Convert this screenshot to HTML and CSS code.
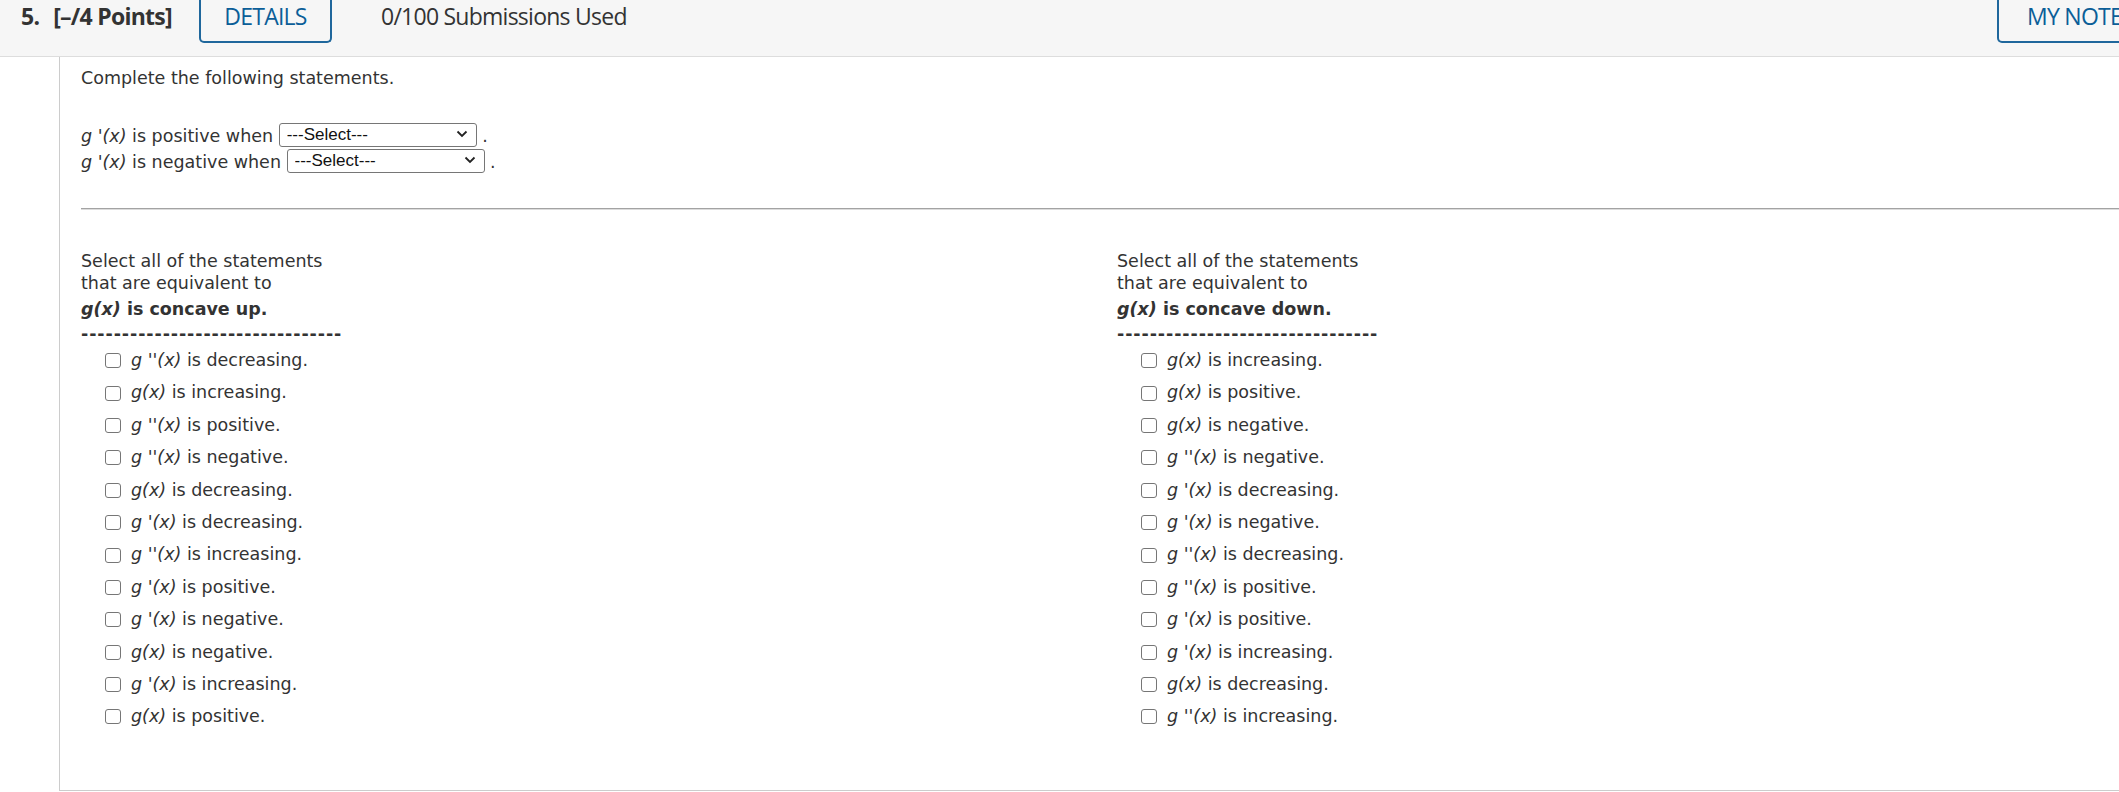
FILE: index.html
```html
<!DOCTYPE html>
<html lang="en">
<head>
<meta charset="utf-8">
<title>Question 5</title>
<link rel="stylesheet" href="styles.css">
</head>
<body>
<header class="topbar">
  <div class="qtitle">
    <span class="qnum">5.</span>
    <span class="points">[–/4 Points]</span>
  </div>
  <button class="tab-btn details" type="button">DETAILS</button>
  <span class="subs">0/100 Submissions Used</span>
  <button class="tab-btn notes" type="button">MY NOTES</button>
</header>

<main class="panel">
  <p class="intro">Complete the following statements.</p>
  <div class="fill">
    <div class="fill-row"><i>g</i> <i>'(x)</i> is positive when <span class="dd"><select><option>---Select---</option></select><svg class="chev" width="12" height="8" viewBox="0 0 12 8"><path d="M1.5 1.5 L6 6 L10.5 1.5" fill="none" stroke="#222" stroke-width="1.8"/></svg></span> .</div>
    <div class="fill-row"><i>g</i> <i>'(x)</i> is negative when <span class="dd"><select><option>---Select---</option></select><svg class="chev" width="12" height="8" viewBox="0 0 12 8"><path d="M1.5 1.5 L6 6 L10.5 1.5" fill="none" stroke="#222" stroke-width="1.8"/></svg></span> .</div>
  </div>
  <hr class="rule">
  <div class="cols">
    <section class="col">
      <div class="col-head">Select all of the statements<br>that are equivalent to</div>
      <div class="concave"><b><i>g(x)</i> is concave up.</b></div>
      <div class="dashes">--------------------------------</div>
      <ul class="opts">
        <li><input type="checkbox"><span><i>g</i> <i>''(x)</i> is decreasing.</span></li>
        <li><input type="checkbox"><span><i>g(x)</i> is increasing.</span></li>
        <li><input type="checkbox"><span><i>g</i> <i>''(x)</i> is positive.</span></li>
        <li><input type="checkbox"><span><i>g</i> <i>''(x)</i> is negative.</span></li>
        <li><input type="checkbox"><span><i>g(x)</i> is decreasing.</span></li>
        <li><input type="checkbox"><span><i>g</i> <i>'(x)</i> is decreasing.</span></li>
        <li><input type="checkbox"><span><i>g</i> <i>''(x)</i> is increasing.</span></li>
        <li><input type="checkbox"><span><i>g</i> <i>'(x)</i> is positive.</span></li>
        <li><input type="checkbox"><span><i>g</i> <i>'(x)</i> is negative.</span></li>
        <li><input type="checkbox"><span><i>g(x)</i> is negative.</span></li>
        <li><input type="checkbox"><span><i>g</i> <i>'(x)</i> is increasing.</span></li>
        <li><input type="checkbox"><span><i>g(x)</i> is positive.</span></li>
      </ul>
    </section>
    <section class="col">
      <div class="col-head">Select all of the statements<br>that are equivalent to</div>
      <div class="concave"><b><i>g(x)</i> is concave down.</b></div>
      <div class="dashes">--------------------------------</div>
      <ul class="opts">
        <li><input type="checkbox"><span><i>g(x)</i> is increasing.</span></li>
        <li><input type="checkbox"><span><i>g(x)</i> is positive.</span></li>
        <li><input type="checkbox"><span><i>g(x)</i> is negative.</span></li>
        <li><input type="checkbox"><span><i>g</i> <i>''(x)</i> is negative.</span></li>
        <li><input type="checkbox"><span><i>g</i> <i>'(x)</i> is decreasing.</span></li>
        <li><input type="checkbox"><span><i>g</i> <i>'(x)</i> is negative.</span></li>
        <li><input type="checkbox"><span><i>g</i> <i>''(x)</i> is decreasing.</span></li>
        <li><input type="checkbox"><span><i>g</i> <i>''(x)</i> is positive.</span></li>
        <li><input type="checkbox"><span><i>g</i> <i>'(x)</i> is positive.</span></li>
        <li><input type="checkbox"><span><i>g</i> <i>'(x)</i> is increasing.</span></li>
        <li><input type="checkbox"><span><i>g(x)</i> is decreasing.</span></li>
        <li><input type="checkbox"><span><i>g</i> <i>''(x)</i> is increasing.</span></li>
      </ul>
    </section>
  </div>
</main>
</body>
</html>
```

FILE: styles.css
```css
html, body {
  margin: 0;
  padding: 0;
  background: #ffffff;
}

body {
  overflow: hidden;
}

.topbar {
  display: flex;
  align-items: flex-start;
  box-sizing: border-box;
  height: 57px;
  background: #f6f6f6;
  border-bottom: 1px solid #dddddd;
  overflow: hidden;
  font-family: "Open Sans", "Liberation Sans", sans-serif;
  font-size: 23px;
  letter-spacing: -0.75px;
  line-height: 32px;
  color: #333333;
}

.qtitle {
  box-sizing: border-box;
  width: 199px;
  padding-left: 21px;
  display: flex;
  font-weight: 700;
  white-space: nowrap;
}

.points {
  margin-left: 14px;
}

.tab-btn {
  box-sizing: border-box;
  height: 43px;
  padding: 0;
  margin: 0;
  background: transparent;
  border: 2px solid #1f679c;
  border-top: 0;
  border-radius: 0 0 5px 5px;
  font: inherit;
  letter-spacing: -0.75px;
  line-height: 32px;
  color: #0b5e98;
  display: flex;
  justify-content: center;
  align-items: flex-start;
  white-space: nowrap;
  cursor: pointer;
}

.details {
  width: 133px;
}

.subs {
  margin-left: 49px;
  white-space: nowrap;
}

.notes {
  margin-left: auto;
  margin-right: -45px;
  width: 167px;
}

.panel {
  display: block;
  margin-left: 59px;
  border-left: 1px solid #cccccc;
  border-bottom: 1px solid #cccccc;
  padding: 10px 0 57px 21px;
  font-family: "DejaVu Sans", Verdana, sans-serif;
  font-size: 17.5px;
  color: #333333;
}

.intro {
  margin: 0;
  line-height: 22px;
}

.fill {
  margin-top: 32px;
}

.fill-row {
  line-height: 26px;
  height: 26px;
}

.dd {
  position: relative;
  display: inline-block;
  vertical-align: 2px;
}

.dd select {
  -webkit-appearance: none;
  appearance: none;
  box-sizing: border-box;
  width: 198px;
  height: 24px;
  margin: 0;
  padding: 0 24px 0 7px;
  border: 1px solid #767676;
  border-radius: 3px;
  background: #ffffff;
  font-family: "Liberation Sans", Arial, sans-serif;
  font-size: 17px;
  color: #111111;
}

.chev {
  position: absolute;
  right: 9px;
  top: 9px;
  pointer-events: none;
}

.rule {
  margin: 35px 0 0 0;
  height: 0;
  border: 0;
  border-top: 1px solid #a3a3a3;
  border-bottom: 1px solid #dcdcdc;
}

.cols {
  display: grid;
  grid-template-columns: 1036px 1fr;
  margin-top: 40px;
}

.col-head {
  line-height: 22px;
}

.concave {
  margin-top: 4px;
  line-height: 22px;
}

.dashes {
  margin-top: 3px;
  line-height: 22px;
  font-weight: 700;
  letter-spacing: 0.9px;
  white-space: nowrap;
}

.opts {
  list-style: none;
  margin: -1px 0 0 0;
  padding: 0;
}

.opts li {
  display: flex;
  align-items: center;
  height: 32.4px;
  line-height: 32.4px;
}

.opts input {
  -webkit-appearance: none;
  appearance: none;
  box-sizing: border-box;
  width: 16px;
  height: 15px;
  margin: 1px 10px 0 24px;
  border: 1.5px solid #767676;
  border-radius: 3px;
  background: #ffffff;
  flex: none;
}
```
